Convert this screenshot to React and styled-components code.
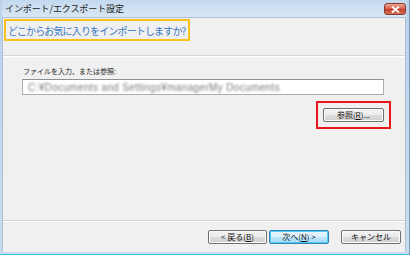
import React from 'react';
import styled, { createGlobalStyle } from 'styled-components';

const GlobalStyle = createGlobalStyle`
	html, body { margin: 0; padding: 0; background: #fff; }
	* { box-sizing: border-box; }
`

const JP = `"Noto Sans CJK JP", "Liberation Sans", sans-serif`

const App = () => {
	return <>
		<GlobalStyle />
		<Window>
			<TitleBar>
				<Title>インポート/エクスポート設定</Title>
				<CloseButton>
					<svg width="9" height="7" viewBox="0 0 9 7">
						<path d="M1 0.5 L8 6.5 M8 0.5 L1 6.5" stroke="#fff" strokeWidth="1.8" />
					</svg>
				</CloseButton>
			</TitleBar>
			<Client>
				<Header>
					<Highlight>どこからお気に入りをインポートしますか?</Highlight>
				</Header>
				<Body>
					<Label>ファイルを入力、または参照:</Label>
					<PathInput>
						<Blurred>C:¥Documents and Settings¥managerMy Documents</Blurred>
					</PathInput>
					<BrowseRow>
						<RedMark>
							<Button>参照(<u>R</u>)...</Button>
						</RedMark>
					</BrowseRow>
				</Body>
				<Footer>
					<Button width={59}>&lt; 戻る(<u>B</u>)</Button>
					<Button width={60} primary>次へ(<u>N</u>) &gt;</Button>
					<Gap />
					<Button width={60}>キャンセル</Button>
				</Footer>
			</Client>
		</Window>
	</>
}

const Window = styled.div`
	width: 410px;
	height: 255px;
	display: flex;
	flex-direction: column;
	background: linear-gradient(180deg, #bcd3ea, #c9dcef);
	padding: 0 3px 2px 2px;
	border-bottom: 1px solid #3cb6e2;
	border-right: 1px solid #7a9cbf;
`
const TitleBar = styled.div`
	height: 17px;
	display: flex;
	align-items: center;
	justify-content: space-between;
	padding: 0 0 1px 3px;
	background: linear-gradient(180deg, #c3d8ee 0%, #cfe0f1 50%, #d9e7f5 100%);
`
const Title = styled.span`
	font-family: ${JP};
	font-size: 9px;
	letter-spacing: -0.1px;
	color: #1b1b1b;
	line-height: 1;
`
const CloseButton = styled.div`
	width: 22px;
	height: 12px;
	margin-top: 2px;
	border-radius: 3px;
	border: 1px solid #8a3b30;
	background: linear-gradient(180deg, #e9a597 0%, #d7634e 45%, #c5422b 55%, #d2705c 100%);
	display: flex;
	align-items: center;
	justify-content: center;
`
const Client = styled.div`
	flex: 1;
	display: flex;
	flex-direction: column;
	background: #f0f0f0;
	border: 1px solid #a8c0d8;
	border-bottom: none;
`
const Header = styled.div`
	height: 38px;
	padding: 1px 1px;
	border-bottom: 1px solid #d5d5d5;
	box-shadow: 0 1px 0 #fff;
`
const Highlight = styled.div`
	width: 186px;
	height: 22px;
	border: 2px solid #f7c21e;
	display: flex;
	align-items: center;
	padding-left: 2px;
	font-family: ${JP};
	font-size: 10px;
	letter-spacing: -0.85px;
	color: #3a78c0;
	white-space: nowrap;
	overflow: hidden;
`
const Body = styled.div`
	flex: 1;
	padding: 9px 21px 0 19px;
	display: flex;
	flex-direction: column;
	border-bottom: 1px solid #d0d0d0;
`
const Label = styled.div`
	font-family: ${JP};
	font-size: 7px;
	color: #222;
	line-height: 12px;
	margin-bottom: 2px;
	padding-left: 1px;
`
const PathInput = styled.div`
	height: 16px;
	background: #fff;
	border: 1px solid #abadb3;
	border-top-color: #8e9095;
	padding-left: 5px;
	display: flex;
	align-items: center;
	overflow: hidden;
`
const Blurred = styled.span`
	font-family: "Liberation Sans", sans-serif;
	font-size: 10px;
	color: #7a7a7a;
	filter: blur(1px);
	white-space: nowrap;
	letter-spacing: 0.35px;
`
const BrowseRow = styled.div`
	display: flex;
	justify-content: flex-end;
	margin-top: 6px;
	margin-right: -7px;
`
const RedMark = styled.div`
	border: 2px solid #e8161a;
	padding: 5px 5px 5px 5px;
`
const Button = styled.div`
	width: ${props => props.width || 61}px;
	height: 14px;
	border-radius: 2px;
	border: 1px solid ${props => props.primary ? '#3c7fb1' : '#707070'};
	background: ${props => props.primary
		? 'linear-gradient(180deg, #eaf6fd 0%, #d9f0fc 50%, #bee6fd 50%, #a7d9f5 100%)'
		: 'linear-gradient(180deg, #f2f2f2 0%, #ebebeb 50%, #dddddd 50%, #cfcfcf 100%)'};
	box-shadow: inset 0 0 0 1px ${props => props.primary ? '#48d1fd' : '#fcfcfc'};
	display: flex;
	align-items: center;
	justify-content: center;
	font-family: ${JP};
	font-size: 8px;
	color: #111;
	line-height: 1;
	white-space: nowrap;
	u { text-decoration: underline; }
`
const Footer = styled.div`
	height: 31px;
	border-top: 1px solid #fff;
	display: flex;
	align-items: center;
	justify-content: flex-end;
	gap: 2px;
	padding: 0 4px 0 0;
`
const Gap = styled.div`
	width: 8px;
`

export default App;
